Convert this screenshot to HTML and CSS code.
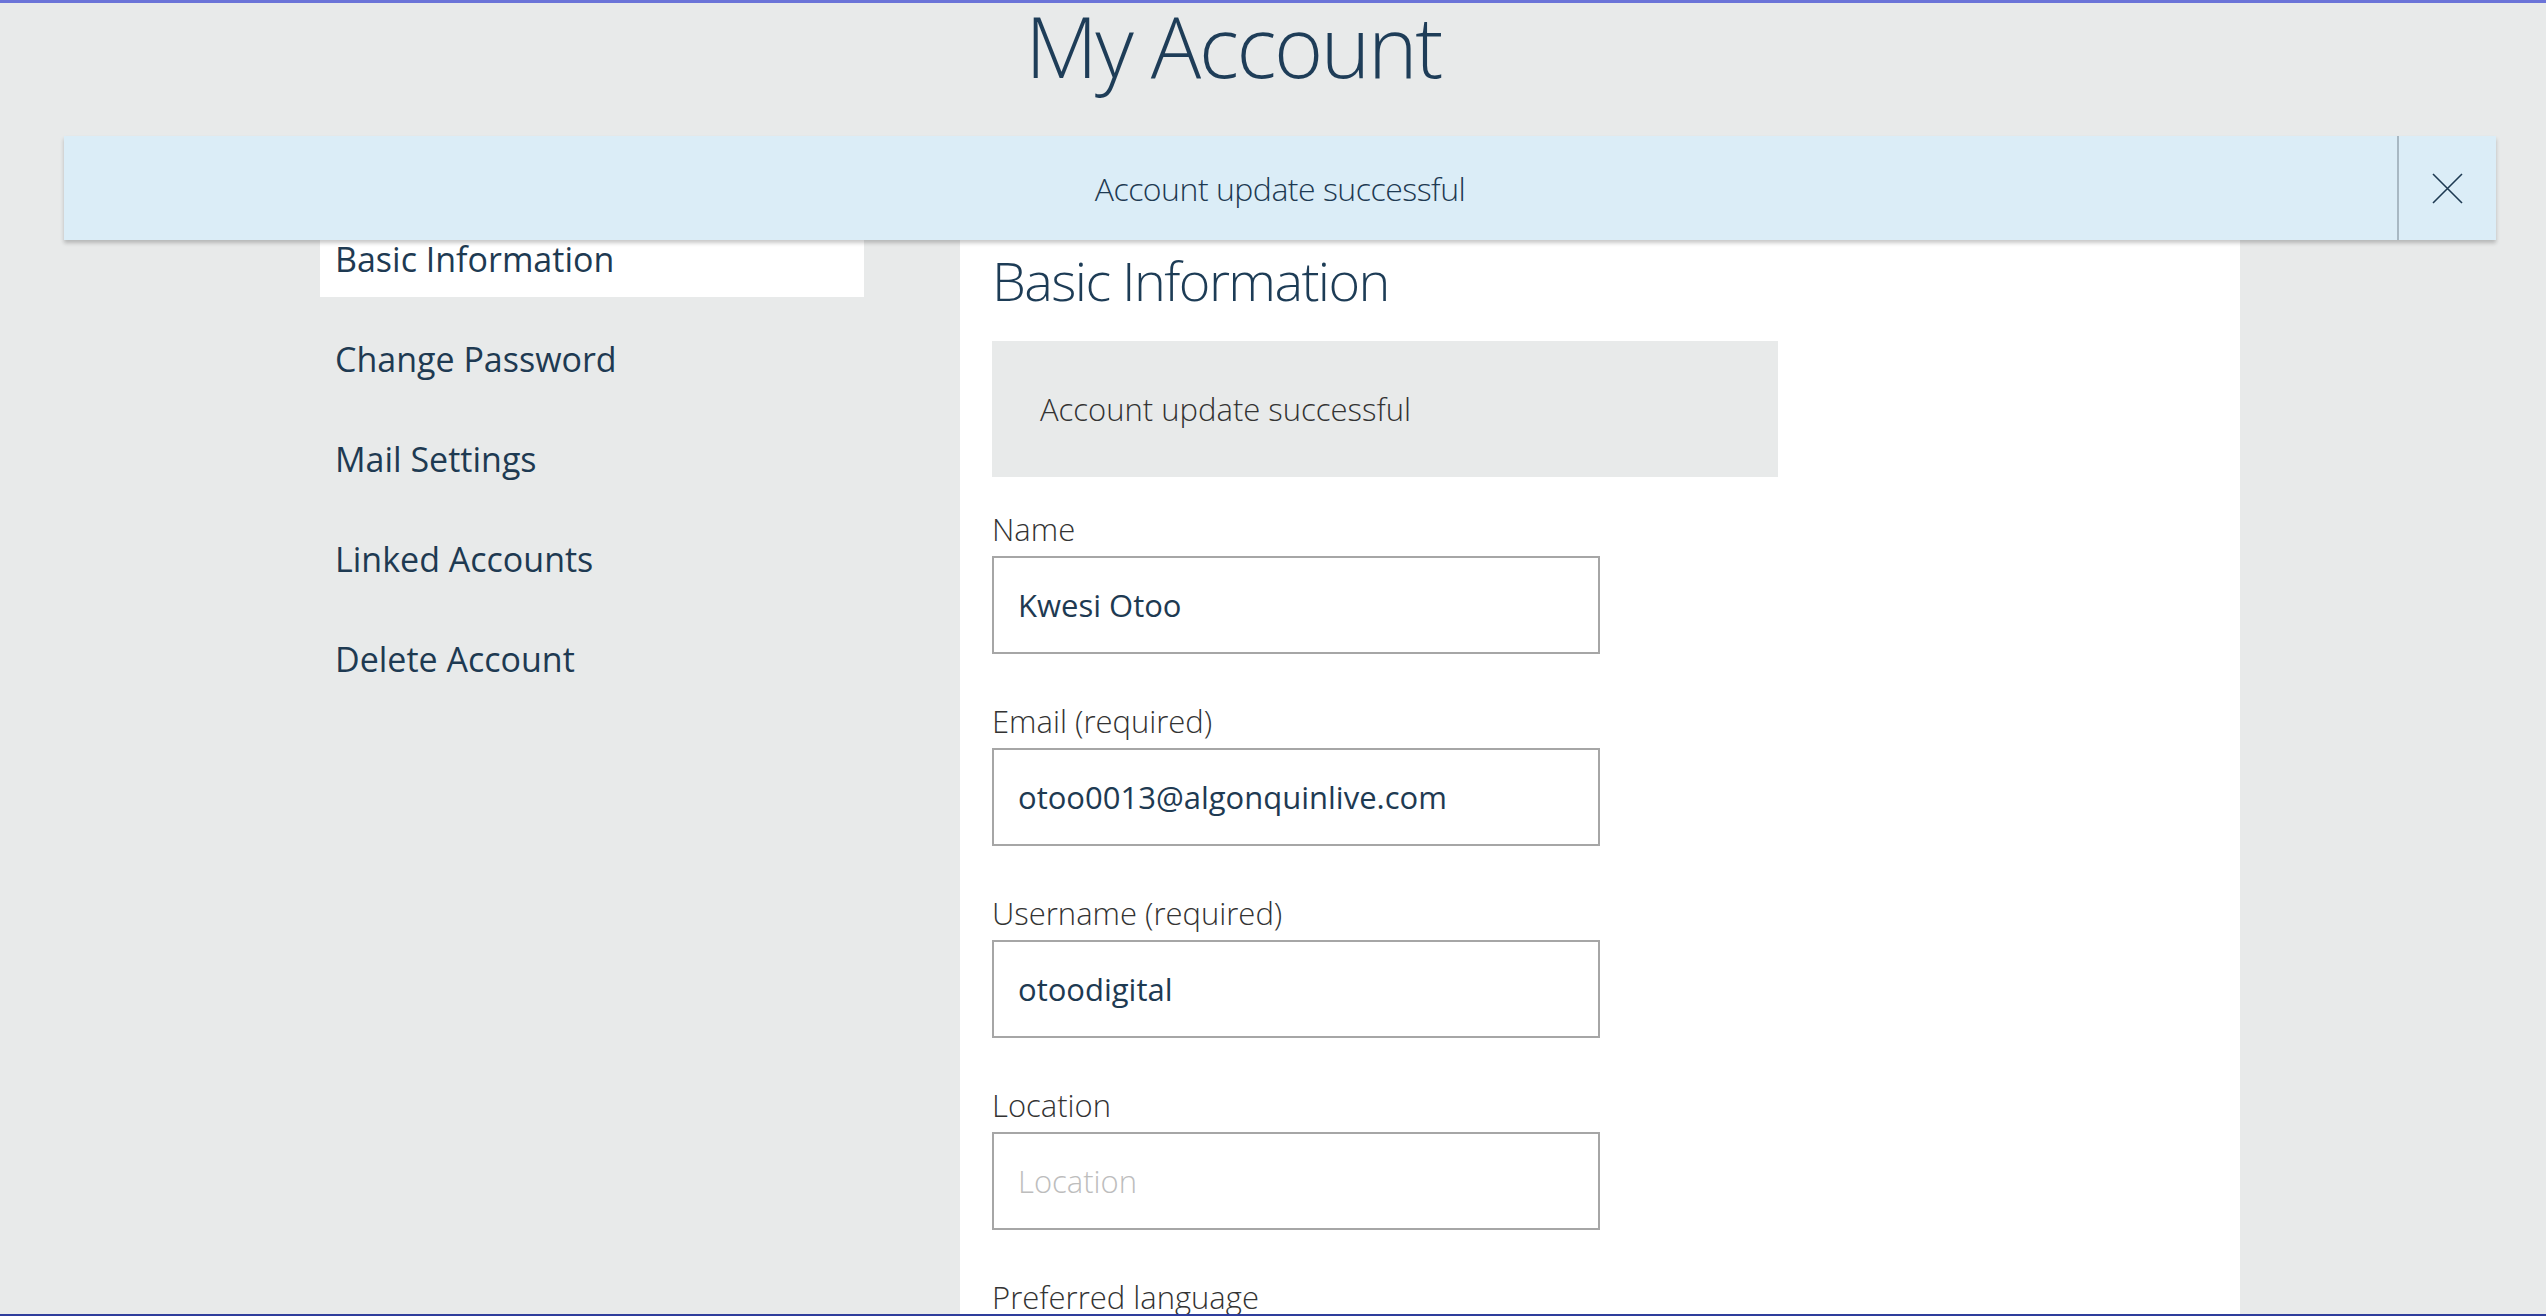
FILE: index.html
```html
<!DOCTYPE html>
<html lang="en">
<head>
<meta charset="utf-8">
<title>My Account</title>
<link rel="stylesheet" href="styles.css">
</head>
<body>
<div class="page">
  <div class="topline"></div>
  <h1 class="title">My Account</h1>

  <div class="toast">
    <span class="toast-text">Account update successful</span>
    <button class="toast-close" aria-label="Close">
      <svg width="31" height="31" viewBox="0 0 31 31"><path d="M1 1 L30 30 M30 1 L1 30" stroke="#1e3a52" stroke-width="1.6" fill="none"/></svg>
    </button>
  </div>

  <div class="layout">
    <nav class="sidebar">
      <a class="nav-item active">Basic Information</a>
      <a class="nav-item">Change Password</a>
      <a class="nav-item">Mail Settings</a>
      <a class="nav-item">Linked Accounts</a>
      <a class="nav-item">Delete Account</a>
    </nav>
    <main class="panel">
      <h2 class="panel-title">Basic Information</h2>
      <div class="notice">Account update successful</div>
      <div class="field">
        <label class="field-label">Name</label>
        <input class="field-input" type="text" value="Kwesi Otoo">
      </div>
      <div class="field">
        <label class="field-label">Email (required)</label>
        <input class="field-input" type="text" value="otoo0013@algonquinlive.com">
      </div>
      <div class="field">
        <label class="field-label">Username (required)</label>
        <input class="field-input" type="text" value="otoodigital">
      </div>
      <div class="field">
        <label class="field-label">Location</label>
        <input class="field-input" type="text" placeholder="Location">
      </div>
      <div class="field">
        <label class="field-label">Preferred language</label>
        <input class="field-input" type="text">
      </div>
    </main>
  </div>
  <div class="bottomline"></div>
</div>
</body>
</html>
```

FILE: styles.css
```css
html, body {
  margin: 0;
  padding: 0;
}
body {
  background: #e8eaea;
  font-family: "Open Sans", "Noto Sans", sans-serif;
  font-weight: 300;
  color: #1e3a52;
  overflow: hidden;
}
.page {
  position: relative;
  height: 1316px;
  overflow: hidden;
}
.topline {
  height: 3px;
  background: #6b74d8;
}
.title {
  margin: 1px 0 0 0;
  padding-right: 80px;
  text-align: center;
  font-size: 84px;
  line-height: 84px;
  font-weight: 300;
  letter-spacing: -2.4px;
  color: #1e3d58;
}
.toast {
  position: absolute;
  top: 136px;
  left: 64px;
  width: 2432px;
  height: 104px;
  background: #dbedf7;
  box-shadow: 0 3px 4px rgba(0, 0, 0, 0.22);
  display: flex;
  align-items: center;
  justify-content: center;
  z-index: 5;
}
.toast-text {
  font-size: 32px;
  letter-spacing: -0.5px;
  color: #1e3a52;
  font-weight: 300;
}
.toast-close {
  position: absolute;
  top: 0;
  right: 0;
  width: 99px;
  height: 104px;
  border: 0;
  border-left: 2px solid #a8b8c3;
  background: transparent;
  padding: 0;
  display: flex;
  align-items: center;
  justify-content: center;
}
.layout {
  display: flex;
  gap: 96px;
  margin-left: 320px;
  margin-top: 112px;
}
.sidebar {
  width: 544px;
  flex: none;
  padding-top: 21px;
  display: flex;
  flex-direction: column;
  gap: 24px;
}
.nav-item {
  height: 76px;
  display: flex;
  align-items: center;
  padding-left: 15px;
  font-size: 34px;
  font-weight: 400;
  color: #1e3a52;
}
.nav-item.active {
  background: #ffffff;
}
.panel {
  width: 1280px;
  flex: none;
  box-sizing: border-box;
  background: #ffffff;
  min-height: 1200px;
  padding: 48px 32px 0 32px;
}
.panel-title {
  margin: 0;
  font-size: 54px;
  line-height: 65px;
  font-weight: 300;
  letter-spacing: -1.6px;
  color: #1d3c56;
}
.notice {
  margin-top: 28px;
  width: 786px;
  height: 136px;
  box-sizing: border-box;
  background: #e8eaea;
  display: flex;
  align-items: center;
  padding-left: 48px;
  font-size: 31px;
  color: #333333;
}
.field {
  display: flex;
  flex-direction: column;
  margin-top: 49px;
}
.notice + .field {
  margin-top: 34px;
}
.field-label {
  font-size: 31px;
  line-height: 36px;
  color: #333333;
}
.field-input {
  margin-top: 9px;
  width: 608px;
  height: 98px;
  box-sizing: border-box;
  border: 2px solid #a6a6a6;
  border-radius: 0;
  padding: 0 24px;
  font-family: "Open Sans", "Noto Sans", sans-serif;
  font-weight: 400;
  font-size: 31px;
  color: #1e3a52;
  background: #ffffff;
  outline: none;
}
.field-input::placeholder {
  color: #bdbdbd;
  font-weight: 300;
}
.bottomline {
  position: absolute;
  left: 0;
  right: 0;
  bottom: 0;
  height: 2px;
  background: #2e3d9c;
}
```
